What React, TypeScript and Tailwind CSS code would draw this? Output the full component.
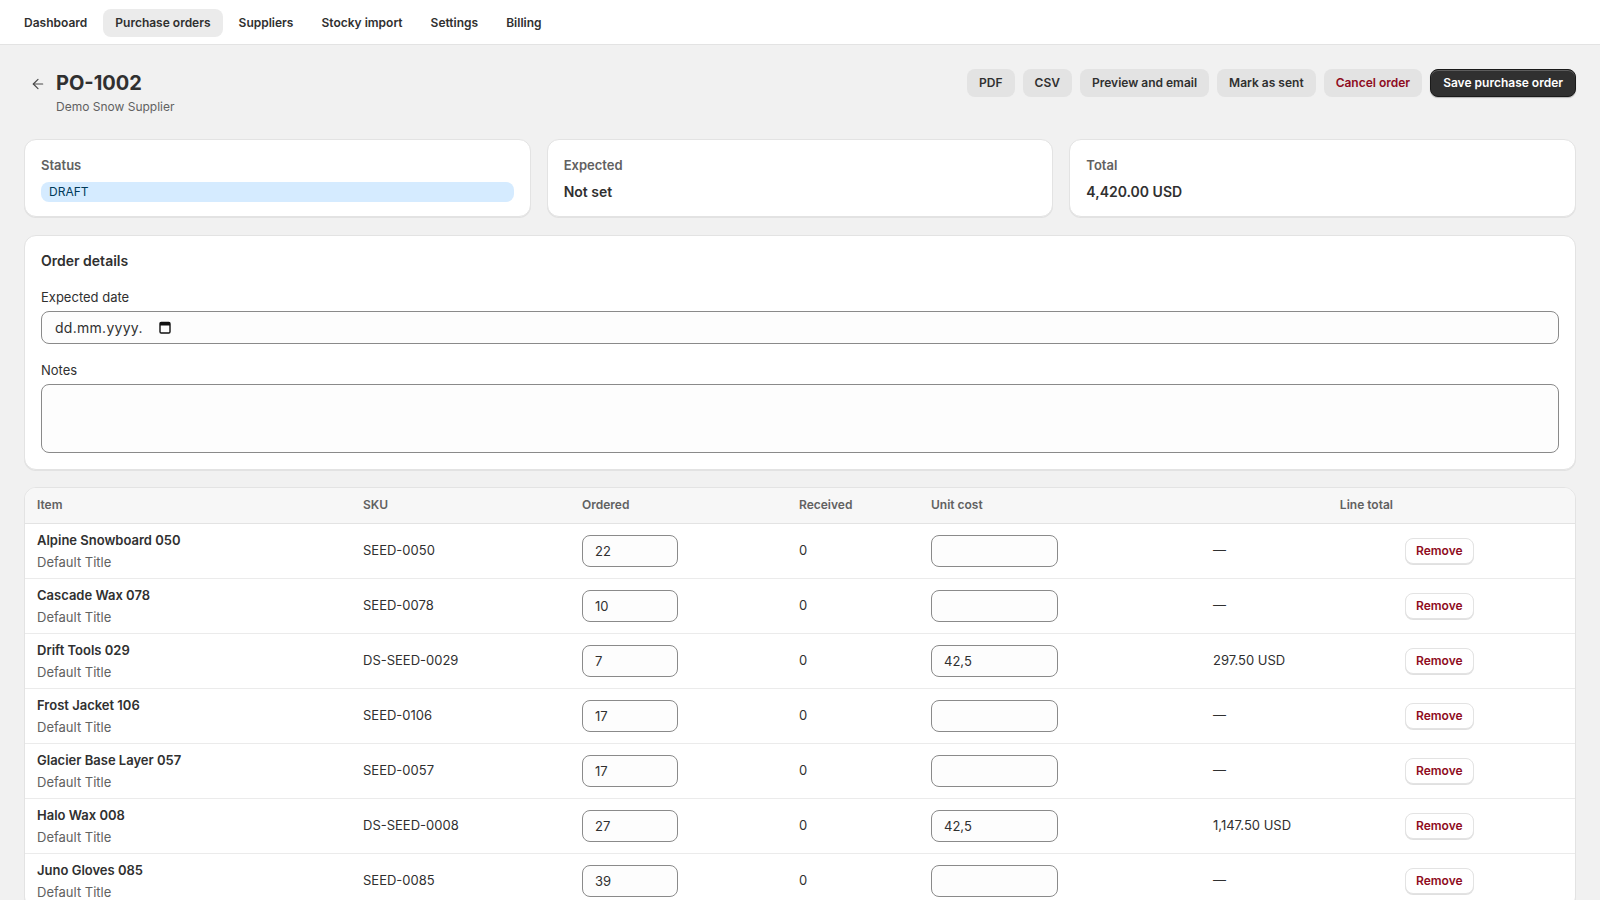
import { ArrowLeft } from "lucide-react";

type Line = {
  name: string;
  sku: string;
  ordered: string;
  received: number;
  unitCost: string;
  total: string;
};

const lines: Line[] = [
  { name: "Alpine Snowboard 050", sku: "SEED-0050", ordered: "22", received: 0, unitCost: "", total: "—" },
  { name: "Cascade Wax 078", sku: "SEED-0078", ordered: "10", received: 0, unitCost: "", total: "—" },
  { name: "Drift Tools 029", sku: "DS-SEED-0029", ordered: "7", received: 0, unitCost: "42,5", total: "297.50 USD" },
  { name: "Frost Jacket 106", sku: "SEED-0106", ordered: "17", received: 0, unitCost: "", total: "—" },
  { name: "Glacier Base Layer 057", sku: "SEED-0057", ordered: "17", received: 0, unitCost: "", total: "—" },
  { name: "Halo Wax 008", sku: "DS-SEED-0008", ordered: "27", received: 0, unitCost: "42,5", total: "1,147.50 USD" },
  { name: "Juno Gloves 085", sku: "SEED-0085", ordered: "39", received: 0, unitCost: "", total: "—" },
];

const navItems = ["Dashboard", "Purchase orders", "Suppliers", "Stocky import", "Settings", "Billing"];

function CalendarIcon() {
  return (
    <svg width="12" height="13" viewBox="0 0 12 13" aria-hidden="true">
      <rect x="1" y="1.5" width="10" height="10.5" rx="1.2" fill="none" stroke="#111" strokeWidth="1.4" />
      <rect x="1" y="1.5" width="10" height="3" fill="#111" />
    </svg>
  );
}

function StatCard({ label, children }: { label: string; children: React.ReactNode }) {
  return (
    <div className="flex flex-col gap-[7px] rounded-xl border border-[#e3e3e3] bg-white px-4 pt-[15px] pb-[14px] shadow-[0_1px_0_0_rgba(26,26,26,0.07)]">
      <p className="text-[13px] font-semibold leading-5 text-[#616161]">{label}</p>
      {children}
    </div>
  );
}

const cellInput =
  "h-8 rounded-lg border border-[#8a8a8a] bg-[#fdfdfd] px-3 text-[13px] text-[#303030] outline-none";

const greyButton = "h-7 rounded-lg bg-[#e3e3e3] px-3 text-[12px] font-semibold";

export default function App() {
  return (
    <div className="min-h-screen bg-[#f1f1f1] font-['Inter',sans-serif] text-[#303030]">
      <nav className="flex h-[45px] items-center gap-1 border-b border-[#e3e3e3] bg-white px-3 pt-px">
        {navItems.map((item) => (
          <button
            key={item}
            type="button"
            className={
              "h-7 rounded-lg px-3 text-[12px] font-semibold text-[#303030] " +
              (item === "Purchase orders" ? "bg-[#ebebeb]" : "")
            }
          >
            {item}
          </button>
        ))}
      </nav>

      <main className="flex flex-col px-6 pt-6">
        <header className="flex items-start justify-between">
          <div className="flex items-start gap-[10px]">
            <button type="button" className="flex h-7 w-[22px] items-center justify-end pt-px text-[#4a4a4a]">
              <ArrowLeft size={16} strokeWidth={1.8} />
            </button>
            <div>
              <h1 className="flex h-7 items-center text-[20px] font-bold leading-6 text-[#303030]">PO-1002</h1>
              <p className="mt-[2px] text-[12px] leading-4 text-[#616161]">Demo Snow Supplier</p>
            </div>
          </div>
          <div className="flex items-center gap-2">
            {["PDF", "CSV", "Preview and email", "Mark as sent"].map((b) => (
              <button key={b} type="button" className={greyButton + " text-[#303030]"}>
                {b}
              </button>
            ))}
            <button type="button" className={greyButton + " text-[#8e0b21]"}>
              Cancel order
            </button>
            <button
              type="button"
              className="h-7 rounded-lg border border-[#1a1a1a] bg-[#303030] px-3 text-[12px] font-semibold text-white shadow-[inset_0_1px_0_rgba(255,255,255,0.22),0_1px_1px_rgba(0,0,0,0.25)]"
            >
              Save purchase order
            </button>
          </div>
        </header>

        <div className="mt-[24px] grid grid-cols-3 gap-4">
          <StatCard label="Status">
            <span className="flex h-5 items-center rounded-lg bg-[#d5ebff] px-2 text-[12px] leading-5 text-[#003a5a]">
              DRAFT
            </span>
          </StatCard>
          <StatCard label="Expected">
            <p className="text-[14px] font-semibold leading-5">Not set</p>
          </StatCard>
          <StatCard label="Total">
            <p className="text-[14px] font-semibold leading-5">4,420.00 USD</p>
          </StatCard>
        </div>

        <section className="mt-[18px] flex flex-col gap-4 rounded-xl border border-[#e3e3e3] bg-white px-4 pt-[15px] pb-4 shadow-[0_1px_0_0_rgba(26,26,26,0.07)]">
          <h2 className="text-[14px] font-semibold leading-5">Order details</h2>
          <label className="flex flex-col gap-1">
            <span className="text-[13px] leading-5">Expected date</span>
            <div className="flex h-[33px] items-center gap-4 rounded-lg border border-[#8a8a8a] bg-[#fdfdfd] pl-[13px]">
              <input
                type="text"
                placeholder="dd.mm.yyyy."
                className="w-[88px] bg-transparent text-[14px] tracking-[0.02em] text-[#303030] outline-none placeholder:text-[#303030]"
              />
              <CalendarIcon />
            </div>
          </label>
          <label className="flex flex-col gap-1">
            <span className="text-[13px] leading-5">Notes</span>
            <textarea className="h-[69px] resize-none rounded-lg border border-[#8a8a8a] bg-[#fdfdfd] px-3 py-2 text-[13px] outline-none" />
          </label>
        </section>

        <section className="mt-[17px] overflow-hidden rounded-xl border border-[#e3e3e3] bg-white shadow-[0_1px_0_0_rgba(26,26,26,0.07)]">
          <table className="w-full table-fixed border-collapse text-left">
            <colgroup>
              <col className="w-[326px]" />
              <col className="w-[219px]" />
              <col className="w-[217px]" />
              <col className="w-[132px]" />
              <col className="w-[282px]" />
              <col className="w-[192px]" />
              <col />
            </colgroup>
            <thead className="bg-[#f7f7f7]">
              <tr className="h-[35px] border-b border-[#e3e3e3] text-[12px] font-semibold text-[#616161]">
                <th className="px-3 font-semibold">Item</th>
                <th className="px-3 font-semibold">SKU</th>
                <th className="px-3 font-semibold">Ordered</th>
                <th className="px-3 font-semibold">Received</th>
                <th className="px-3 font-semibold">Unit cost</th>
                <th className="pl-3 text-right font-semibold">Line total</th>
                <th className="px-3" />
              </tr>
            </thead>
            <tbody>
              {lines.map((l) => (
                <tr key={l.name} className="h-[55px] border-t border-[#ebebeb] text-[13px] first:border-t-0">
                  <td className="px-3 py-[6px]">
                    <div className="flex flex-col gap-[2px]">
                      <p className="font-semibold leading-5">{l.name}</p>
                      <p className="leading-5 text-[#616161]">Default Title</p>
                    </div>
                  </td>
                  <td className="px-3">{l.sku}</td>
                  <td className="px-3">
                    <input defaultValue={l.ordered} className={cellInput + " w-24"} />
                  </td>
                  <td className="px-3">{l.received}</td>
                  <td className="px-3">
                    <input defaultValue={l.unitCost} className={cellInput + " w-[127px]"} />
                  </td>
                  <td className="px-3">{l.total}</td>
                  <td className="px-3">
                    <button
                      type="button"
                      className="h-[26px] rounded-lg border border-[#e3e3e3] bg-white px-[10px] text-[12px] font-semibold text-[#8e0b21] shadow-[0_1px_0_0_rgba(0,0,0,0.12)]"
                    >
                      Remove
                    </button>
                  </td>
                </tr>
              ))}
            </tbody>
          </table>
        </section>
      </main>
    </div>
  );
}
